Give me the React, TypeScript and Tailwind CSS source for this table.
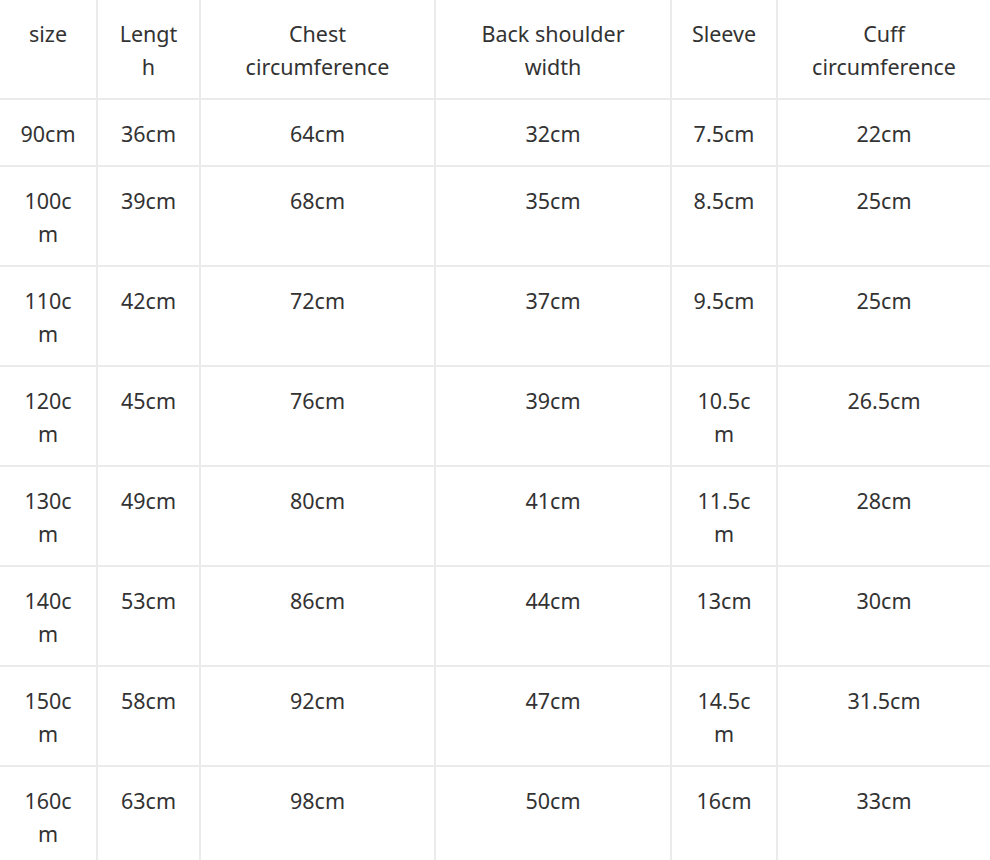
const header = ["size", "Lengt\nh", "Chest\ncircumference", "Back shoulder\nwidth", "Sleeve", "Cuff\ncircumference"];

const rows = [
  ["90cm", "36cm", "64cm", "32cm", "7.5cm", "22cm"],
  ["100c\nm", "39cm", "68cm", "35cm", "8.5cm", "25cm"],
  ["110c\nm", "42cm", "72cm", "37cm", "9.5cm", "25cm"],
  ["120c\nm", "45cm", "76cm", "39cm", "10.5c\nm", "26.5cm"],
  ["130c\nm", "49cm", "80cm", "41cm", "11.5c\nm", "28cm"],
  ["140c\nm", "53cm", "86cm", "44cm", "13cm", "30cm"],
  ["150c\nm", "58cm", "92cm", "47cm", "14.5c\nm", "31.5cm"],
  ["160c\nm", "63cm", "98cm", "50cm", "16cm", "33cm"],
];

// one table cell, lines split on \n
const Cell = ({ text, last }: { text: string; last: boolean }) => {
  const lines = text.split("\n");
  return (
    <div
      className={`border-b-2 border-[#ebebeb] pt-[17px] pb-[15px] text-center leading-[33px] ${
        last ? "" : "border-r-2"
      }`}
    >
      {lines.map((l, i) => (
        <div key={i}>{l}</div>
      ))}
    </div>
  );
};

export default function App() {
  return (
    <div
      className="h-[860px] w-[990px] overflow-hidden bg-white text-[21.5px] text-[#333333]"
      style={{ fontFamily: "'Noto Sans', sans-serif" }}
    >
      <div className="grid grid-cols-[98px_103px_235px_236px_106px_212px]">
        {header.map((h, i) => (
          <Cell key={i} text={h} last={i === 5} />
        ))}
        {rows.map((r, ri) =>
          r.map((c, ci) => <Cell key={`${ri}-${ci}`} text={c} last={ci === 5} />)
        )}
      </div>
    </div>
  );
}
